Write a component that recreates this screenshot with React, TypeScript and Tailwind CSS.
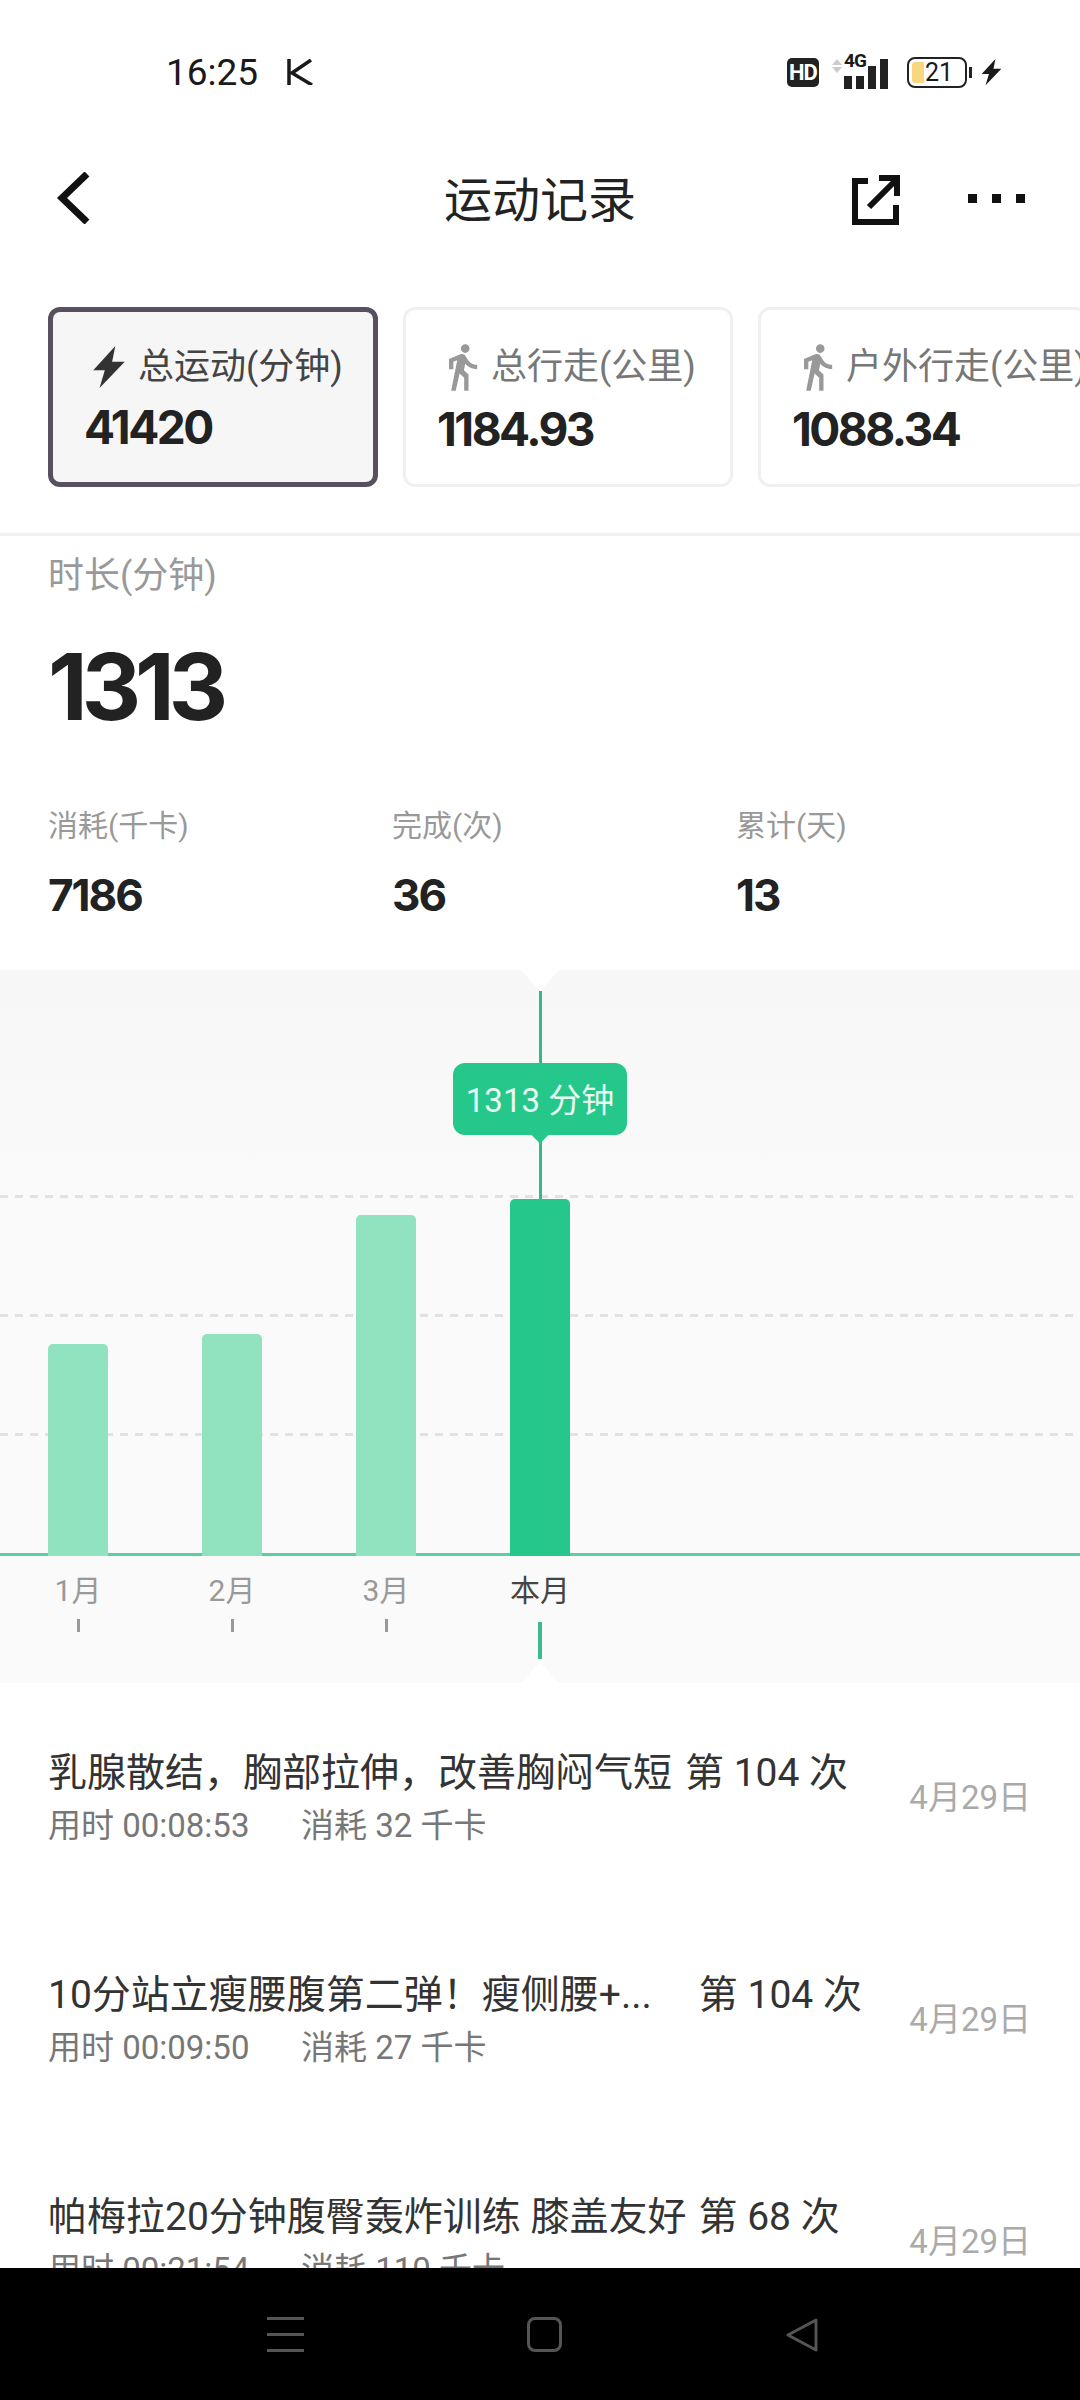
import React from 'react';
import { MdDirectionsWalk } from 'react-icons/md';

const cjk = '[font-family:Roboto,"Noto_Sans_CJK_SC",sans-serif]';

const Bolt = ({ className }: { className: string }) => (
  <svg viewBox="0 0 32 40" className={className} fill="currentColor">
    <path d="M22 0 1 23h11L7 40 31 15H19L22 0z" />
  </svg>
);

const summary = [
  { label: '总运动(分钟)', value: '41420', active: true },
  { label: '总行走(公里)', value: '1184.93', active: false },
  { label: '户外行走(公里)', value: '1088.34', active: false },
];

const stats = [
  { label: '消耗(千卡)', value: '7186', width: 'w-[344px]' },
  { label: '完成(次)', value: '36', width: 'w-[344px]' },
  { label: '累计(天)', value: '13', width: 'w-[200px]' },
];

const months = [
  { label: '1月', height: 'h-[212px]' },
  { label: '2月', height: 'h-[222px]' },
  { label: '3月', height: 'h-[341px]' },
  { label: '本月', height: 'h-[357px]', current: true },
];

const records = [
  { name: '乳腺散结，胸部拉伸，改善胸闷气短', count: '第 104 次', gap: 'ml-[13px]', time: '00:08:53', kcal: 32 },
  { name: '10分站立瘦腰腹第二弹！瘦侧腰+...', count: '第 104 次', gap: 'ml-[47px]', time: '00:09:50', kcal: 27 },
  { name: '帕梅拉20分钟腹臀轰炸训练 膝盖友好', count: '第 68 次', gap: 'ml-[12px]', time: '00:21:54', kcal: 110 },
];

const StatusBar = () => (
  <div className="h-[144px] flex items-center justify-between pl-[166px] pr-[78px] text-[#1a1a1a] font-[Roboto,sans-serif]">
    <div className="flex items-center">
      <span className="text-[37px] leading-none">16:25</span>
      <svg viewBox="0 0 28 26" className="ml-[28px] w-[28px] h-[26px]" fill="none" stroke="currentColor" strokeWidth="3.5">
        <path d="M3 0v26M25 1 6 14l20 12" />
      </svg>
    </div>
    <div className="flex items-center">
      <div className="w-[32px] h-[29px] rounded-[5px] bg-[#222] text-white text-[22px] font-bold leading-[29px] text-center tracking-[-1px]">HD</div>
      <div className="ml-[13px] flex flex-col gap-[2px] -mt-[12px]">
        <div className="w-0 h-0 border-x-[5px] border-x-transparent border-b-[6px] border-b-[#ccc]" />
        <div className="w-0 h-0 border-x-[5px] border-x-transparent border-t-[6px] border-t-[#ccc]" />
      </div>
      <div className="relative ml-[2px] w-[44px] h-[34px] flex items-end gap-[4px]">
        <span className="absolute left-0 -top-[4px] text-[19px] font-bold leading-none tracking-[-1px]">4G</span>
        <div className="w-[8px] h-[13px] bg-[#222]" />
        <div className="w-[8px] h-[13px] bg-[#222]" />
        <div className="w-[8px] h-[23px] bg-[#222]" />
        <div className="w-[8px] h-[30px] bg-[#222]" />
      </div>
      <div className="ml-[19px] w-[60px] h-[31px] rounded-[8px] border-[2px] border-[#222] p-[3px] flex items-center">
        <div className="w-[12px] h-full bg-[#f9d77e] rounded-l-[3px]" />
        <span className="ml-[1px] text-[25px] leading-none">21</span>
      </div>
      <div className="ml-[2px] w-[3px] h-[11px] bg-[#222]" />
      <Bolt className="ml-[9px] w-[21px] h-[30px]" />
    </div>
  </div>
);

const NavBar = () => (
  <div className="relative h-[108px] flex items-center justify-center">
    <svg viewBox="0 0 34 52" className="absolute left-[56px] top-[28px] w-[34px] h-[52px]" fill="none" stroke="#111" strokeWidth="7">
      <path d="M31 2 6 26l25 24" />
    </svg>
    <span className={`${cjk} text-[48px] leading-none text-[#222] translate-y-[3px]`}>运动记录</span>
    <svg viewBox="0 0 48 50" className="absolute left-[852px] top-[31px] w-[48px] h-[50px]" fill="none" stroke="#111" strokeWidth="6">
      <path d="M16 6H3v41h41V30M17 32 43 6M27 3h18v18" />
    </svg>
    <div className="absolute left-[968px] top-[50px] flex gap-[15px]">
      <div className="w-[9px] h-[9px] bg-[#111]" />
      <div className="w-[9px] h-[9px] bg-[#111]" />
      <div className="w-[9px] h-[9px] bg-[#111]" />
    </div>
  </div>
);

const SummaryCards = () => (
  <div className="flex gap-[25px] pl-[48px] pt-[55px] pb-[46px] overflow-hidden border-b-[3px] border-[#f0f0f0]">
    {summary.map((item) => (
      <div
        key={item.label}
        className={`shrink-0 w-[330px] h-[180px] rounded-[12px] pl-[31px] pt-[31px] ${
          item.active ? 'border-[5px] border-[#58505f] bg-[#f6f6f6]' : 'border-[3px] border-[#f0f0f0] bg-white'
        }`}
      >
        <div className={`flex items-center text-[36px] leading-[48px] whitespace-nowrap ${cjk} ${item.active ? 'text-[#444]' : 'text-[#777]'}`}>
          {item.active ? (
            <Bolt className="ml-[8px] w-[34px] h-[42px] text-[#333] mr-[12px] shrink-0" />
          ) : (
            <MdDirectionsWalk className="w-[52px] h-[52px] text-[#999] -ml-[1px] mr-[3px] shrink-0" />
          )}
          {item.label}
        </div>
        <div className="mt-[12px] font-[Inter,sans-serif] font-bold text-[#222] text-[46px] leading-[48px] tracking-[-2.5px]">{item.value}</div>
      </div>
    ))}
  </div>
);

const Overview = () => (
  <div className="h-[434px] pl-[48px] pt-[18px]">
    <div className={`${cjk} text-[36px] leading-[44px] text-[#999]`}>时长(分钟)</div>
    <div className="mt-[34px] font-[Inter,sans-serif] font-bold text-[#222] text-[92px] leading-[110px] tracking-[-6px]">1313</div>
    <div className="mt-[64px] flex">
      {stats.map((s) => (
        <div key={s.label} className={s.width}>
          <div className={`${cjk} text-[30px] leading-[40px] text-[#999]`}>{s.label}</div>
          <div className="mt-[23px] font-[Inter,sans-serif] font-bold text-[#222] text-[44px] leading-[52px] tracking-[-2px]">{s.value}</div>
        </div>
      ))}
    </div>
  </div>
);

const gridLine = 'absolute left-0 right-0 h-[3px] bg-[repeating-linear-gradient(90deg,#e2e2e2_0_8px,transparent_8px_15px)]';

const Chart = () => (
  <div className="relative h-[713px] bg-gradient-to-b from-[#f7f7f7] to-[#fafafa] to-[35%] overflow-hidden">
    <div className={`${gridLine} top-[225px]`} />
    <div className={`${gridLine} top-[344px]`} />
    <div className={`${gridLine} top-[463px]`} />

    <div className="relative h-[586px] flex items-end gap-[94px] pl-[48px] border-b-[3px] border-[#5acfa5]">
      {months.map((m) => (
        <div key={m.label} className={`w-[60px] ${m.height} rounded-t-[5px] -mb-[3px] ${m.current ? 'bg-[#26c78b]' : 'bg-[#91e2be]'}`} />
      ))}
    </div>

    <div className={`flex gap-[94px] pl-[48px] ${cjk}`}>
      {months.map((m) => (
        <div key={m.label} className="w-[60px] flex flex-col items-center">
          <span className={`mt-[15px] text-[30px] leading-[40px] whitespace-nowrap ${m.current ? 'text-[#444]' : 'text-[#999]'}`}>{m.label}</span>
          {m.current ? (
            <div className="mt-[11px] w-[4px] h-[37px] bg-[#3dba8e]" />
          ) : (
            <div className="mt-[8px] w-[3px] h-[13px] bg-[#999]" />
          )}
        </div>
      ))}
    </div>

    {/* marker over the current month */}
    <div className="absolute left-[539px] top-[21px] w-[3px] h-[208px] bg-[#36b98a]" />
    <div className="absolute left-[453px] top-[93px] w-[174px] h-[72px] rounded-[12px] bg-[#26c78b] flex items-center justify-center">
      <span className={`${cjk} text-[33px] leading-none text-[#e8fbf3] whitespace-nowrap translate-y-[1px]`}>1313 分钟</span>
      <div className="absolute left-[81px] top-[66px] w-[12px] h-[12px] rotate-45 bg-[#26c78b]" />
    </div>
    <svg viewBox="0 0 38 21" className="absolute left-[521px] top-0 w-[38px] h-[21px]" fill="#fff">
      <path d="M0 0h38L21 19q-2 2-4 0L0 0z" />
    </svg>
    <svg viewBox="0 0 38 21" className="absolute left-[521px] bottom-0 w-[38px] h-[21px]" fill="#fff">
      <path d="M0 21h38L21 2q-2-2-4 0L0 21z" />
    </svg>
  </div>
);

const RecordList = () => (
  <div className={`pt-[3px] ${cjk}`}>
    {records.map((r) => (
      <div key={r.time} className="h-[222px] flex items-center justify-between pl-[48px] pr-[49px]">
        <div>
          <div className="text-[39px] leading-[48px] text-[#333] whitespace-nowrap">
            {r.name}
            <span className={`${r.gap} inline-block`}>{r.count}</span>
          </div>
          <div className="mt-[9px] flex text-[33px] leading-[40px] text-[#777]">
            <span className="w-[253px]">用时 {r.time}</span>
            <span>消耗 {r.kcal} 千卡</span>
          </div>
        </div>
        <span className="text-[33px] leading-none text-[#aaa] whitespace-nowrap">4月29日</span>
      </div>
    ))}
  </div>
);

const BottomBar = () => (
  <div className="h-[132px] shrink-0 bg-black flex items-start pt-[49px] pl-[267px] gap-[223px]">
    <div className="w-[37px] h-[35px] flex flex-col justify-between">
      <div className="h-[3px] bg-[#555]" />
      <div className="h-[3px] bg-[#555]" />
      <div className="h-[3px] bg-[#555]" />
    </div>
    <div className="w-[35px] h-[35px] rounded-[8px] border-[3px] border-[#555]" />
    <svg viewBox="0 0 34 36" className="w-[34px] h-[36px]" fill="none" stroke="#555" strokeWidth="3" strokeLinejoin="round">
      <path d="M31 3 3 18l28 15V3z" />
    </svg>
  </div>
);

export default function App() {
  return (
    <div className="w-[1080px] h-[2400px] bg-white flex flex-col overflow-hidden">
      <div className="flex-1 min-h-0 overflow-hidden">
        <StatusBar />
        <NavBar />
        <SummaryCards />
        <Overview />
        <Chart />
        <RecordList />
      </div>
      <BottomBar />
    </div>
  );
}
